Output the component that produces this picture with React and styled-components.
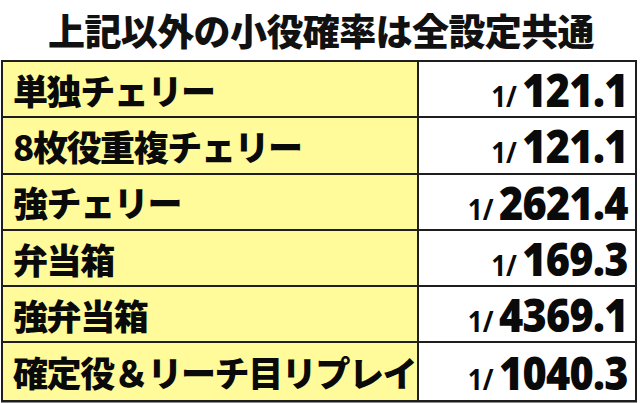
import React from "react";
import styled, { createGlobalStyle } from "styled-components";

const GlobalStyle = createGlobalStyle`
  html, body {
    margin: 0;
    padding: 0;
    background: #ffffff;
  }
  body {
    width: 640px;
    height: 403px;
    overflow: hidden;
    font-family: "Noto Sans CJK JP", "Noto Sans", sans-serif;
  }
`;

const rows = [
  { label: "単独チェリー", value: "121.1" },
  { label: "8枚役重複チェリー", value: "121.1" },
  { label: "強チェリー", value: "2621.4" },
  { label: "弁当箱", value: "169.3" },
  { label: "強弁当箱", value: "4369.1" },
  { label: "確定役＆リーチ目リプレイ", value: "1040.3" },
];

const Page = styled.div`
  width: 640px;
  height: 403px;
  display: flex;
  flex-direction: column;
`;

const Title = styled.h1`
  margin: 0;
  height: 60px;
  display: flex;
  align-items: center;
  justify-content: center;
  padding-left: 2px;
  font-family: "Noto Sans CJK JP", sans-serif;
  font-size: 37px;
  font-weight: 900;
  letter-spacing: -0.6px;
  color: #111111;
`;

const Table = styled.div`
  margin-left: 1px;
  width: 636px;
  display: grid;
  grid-template-columns: 416px 1fr;
  grid-auto-rows: 56.3px;
  border: 2px solid #1e1e1e;
  box-sizing: border-box;
  box-shadow: 0 2px 0 #8a8a8a;
`;

const Label = styled.div`
  background: #fffb9b;
  border-right: 2px solid #1e1e1e;
  border-bottom: ${(p) => (p.last ? "none" : "2px solid #1e1e1e")};
  display: flex;
  align-items: center;
  padding-left: 10px;
  font-family: "Noto Sans CJK JP", sans-serif;
  font-size: 35px;
  font-weight: 900;
  letter-spacing: -1.4px;
  color: #0a0a0a;
  white-space: nowrap;
  overflow: hidden;
`;

const Value = styled.div`
  background: #ffffff;
  border-bottom: ${(p) => (p.last ? "none" : "2px solid #1e1e1e")};
  display: flex;
  align-items: center;
  justify-content: flex-end;
  padding-right: 7px;
  color: #0a0a0a;
`;

const Number = styled.span`
  display: inline-flex;
  align-items: baseline;
  transform: scaleX(0.9);
  transform-origin: right center;
  font-family: "Open Sans", sans-serif;
  font-weight: 800;
  white-space: nowrap;
`;

const Prefix = styled.span`
  font-size: 29px;
  font-weight: 700;
  margin-right: 6px;
`;

const Big = styled.span`
  font-size: 46px;
  letter-spacing: -0.8px;
`;

export default function App() {
  return (
    <>
      <GlobalStyle />
      <Page>
        <Title>上記以外の小役確率は全設定共通</Title>
        <Table>
          {rows.map((r, i) => (
            <React.Fragment key={i}>
              <Label last={i === rows.length - 1}>{r.label}</Label>
              <Value last={i === rows.length - 1}>
                <Number>
                  <Prefix>1/</Prefix>
                  <Big>{r.value}</Big>
                </Number>
              </Value>
            </React.Fragment>
          ))}
        </Table>
      </Page>
    </>
  );
}
